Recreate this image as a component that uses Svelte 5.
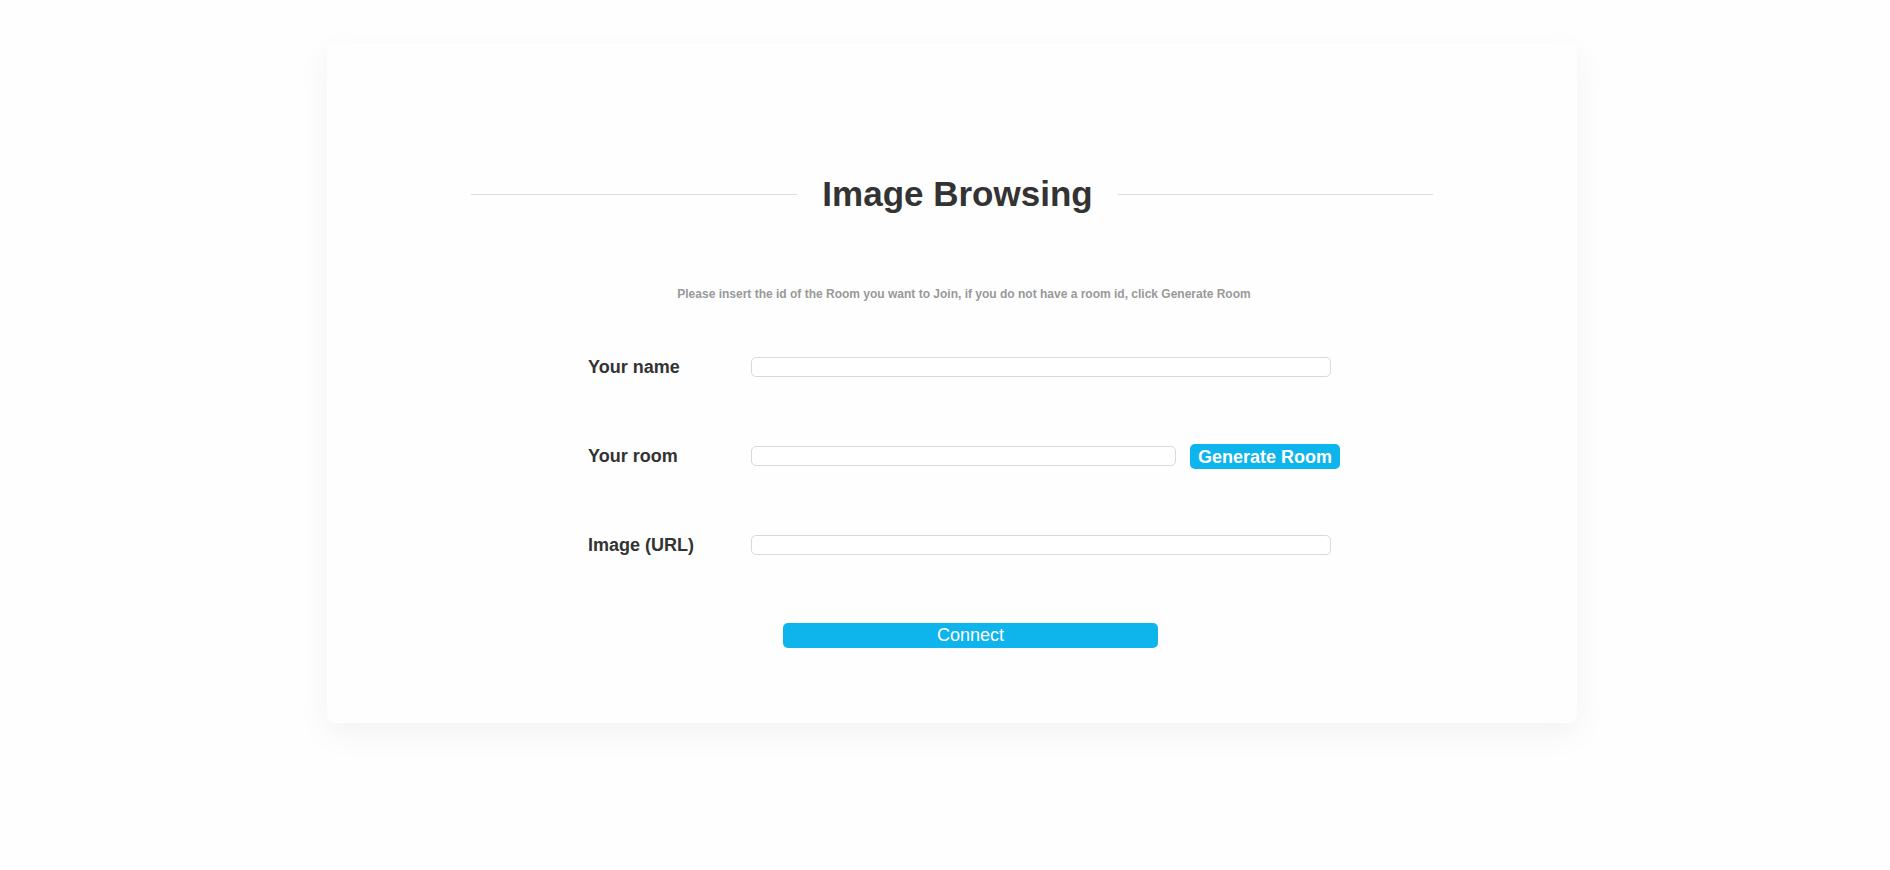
<script>
  let name = $state('');
  let room = $state('');
  let image = $state('');
  function generateRoom() {
    room = Math.random().toString(36).slice(2, 10);
  }
</script>

<div class="page">
  <main class="card">
    <div class="heading"><h1>Image Browsing</h1></div>
    <p class="hint">Please insert the id of the Room you want to Join, if you do not have a room id, click Generate Room</p>
    <form onsubmit={(e) => e.preventDefault()}>
      <div class="row">
        <label for="name">Your name</label>
        <input id="name" type="text" bind:value={name} />
      </div>
      <div class="row room">
        <label for="room">Your room</label>
        <input id="room" type="text" bind:value={room} />
        <button class="generate" type="button" onclick={generateRoom}>Generate Room</button>
      </div>
      <div class="row">
        <label for="image">Image (URL)</label>
        <input id="image" type="text" bind:value={image} />
      </div>
      <button class="connect" type="submit">Connect</button>
    </form>
  </main>
</div>

<style>
  :global(body) { background: #fefefe; }
  .page {
    box-sizing: border-box;
    min-height: 100vh;
    padding: 44px 313px 44px 327px;
    background: #fefefe;
  }
  .card {
    padding: 124px 144px 75px;
    border-radius: 8px;
    background: #fefefe;
    box-shadow: 0 10px 34px rgba(0, 0, 0, 0.05);
    font-family: "Liberation Sans", Arial, sans-serif;
    color: #333;
  }
  .heading { display: flex; align-items: center; gap: 25px; }
  .heading::before, .heading::after { content: ""; flex: 327 1 0; height: 1px; background: #d9dddc; }
  .heading::after { flex-grow: 316; }
  h1 { margin: 0; font-size: 35px; line-height: 52px; }
  .hint { margin: 64px 0 0 24px; text-align: center; font-size: 12px; line-height: 20px; font-weight: bold; color: #999; }
  form { display: flex; flex-direction: column; gap: 63px; margin: 50px 93px 0 117px; }
  .row { display: flex; align-items: center; height: 26px; padding-right: 9px; }
  .room { padding-right: 0; }
  label { flex: 0 0 163px; font-size: 18px; font-weight: bold; }
  input { box-sizing: border-box; flex: 1; min-width: 0; height: 20px; border: 1px solid #d9d9d9; border-radius: 5px; background: #fff; }
  button { box-sizing: border-box; height: 25px; padding: 0; border: 0; border-radius: 5px; background: #0eb4ec; color: #fff; font: 18px/25px "Liberation Sans", Arial, sans-serif; }
  .generate { width: 150px; margin-left: 14px; padding-top: 2px; line-height: 23px; font-weight: bold; }
  .connect { width: 375px; margin: 2px 0 0 195px; }
</style>
